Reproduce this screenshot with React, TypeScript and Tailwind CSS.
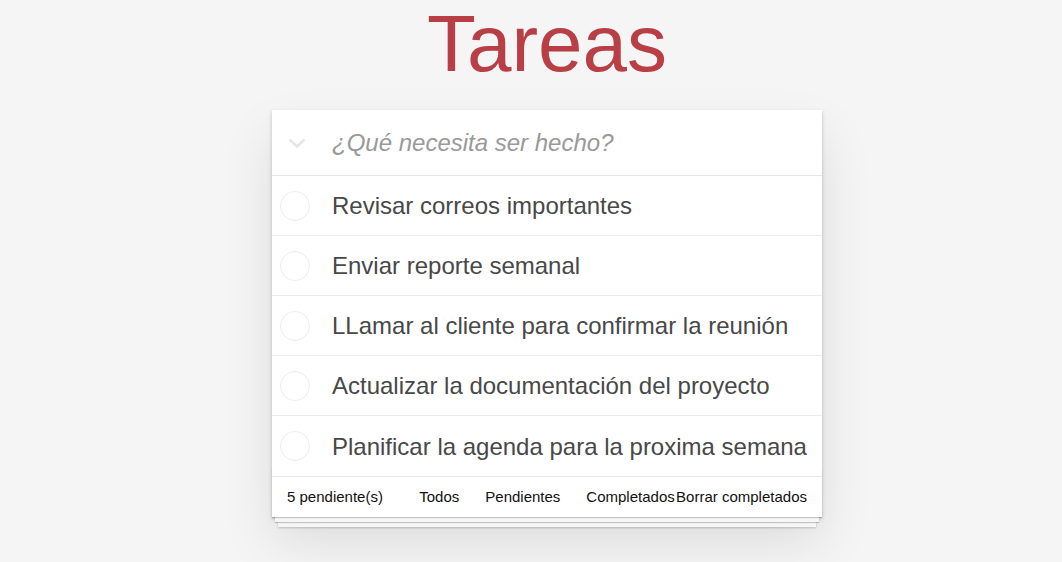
const todos = [
  "Revisar correos importantes",
  "Enviar reporte semanal",
  "LLamar al cliente para confirmar la reunión",
  "Actualizar la documentación del proyecto",
  "Planificar la agenda para la proxima semana",
];

function TodoItem({ text }: { text: string }) {
  return (
    <li className="flex h-[60px] items-center border-b border-[#ededed] last:border-b-0">
      <span className="ml-[8px] h-[30px] w-[30px] shrink-0 rounded-full border border-[#ededed]" />
      <span className="ml-[22px] mt-[2px] text-[24px] leading-[1.2] text-[#484848]">{text}</span>
    </li>
  );
}

export default function App() {
  return (
    <div
      className="min-h-screen bg-[#f5f5f5] pl-[32px] pt-[4px]"
      style={{ fontFamily: '"Liberation Sans", Arial, sans-serif' }}
    >
      <div className="mx-auto w-[550px]">
        <h1 className="text-center text-[80px] leading-[80px] font-normal text-[#b83f45]">Tareas</h1>

        <section className="mt-[26px] bg-white shadow-[0_2px_4px_0_rgba(0,0,0,0.2),0_25px_50px_0_rgba(0,0,0,0.1)]">
          <header className="flex h-[66px] items-center border-b border-[#e6e6e6]">
            <svg className="ml-[16px] mt-[2px]" width="18" height="11" viewBox="0 0 18 11" fill="none">
              <polyline points="1.5,1.5 9,8.5 16.5,1.5" stroke="#e6e6e6" strokeWidth="2.6" />
            </svg>
            <span className="ml-[26px] text-[24px] italic text-[#999999]">¿Qué necesita ser hecho?</span>
          </header>

          <ul>
            {todos.map((t) => (
              <TodoItem key={t} text={t} />
            ))}
          </ul>

          <footer className="relative grid h-[41px] grid-cols-[1fr_auto_1fr] items-center border-t border-[#e6e6e6] px-[15px] text-[15px] text-[#111111]">
            <div className="pointer-events-none absolute inset-x-0 bottom-0 h-[50px] overflow-hidden shadow-[0_1px_1px_rgba(0,0,0,0.2),0_8px_0_-3px_#f6f6f6,0_9px_1px_-3px_rgba(0,0,0,0.2),0_16px_0_-6px_#f6f6f6,0_17px_2px_-6px_rgba(0,0,0,0.2)]" />
            <span className="relative">5 pendiente(s)</span>
            <ul className="relative flex gap-[26px]">
              <li>Todos</li>
              <li>Pendientes</li>
              <li>Completados</li>
            </ul>
            <span className="relative justify-self-end">Borrar completados</span>
          </footer>
        </section>
      </div>
    </div>
  );
}
